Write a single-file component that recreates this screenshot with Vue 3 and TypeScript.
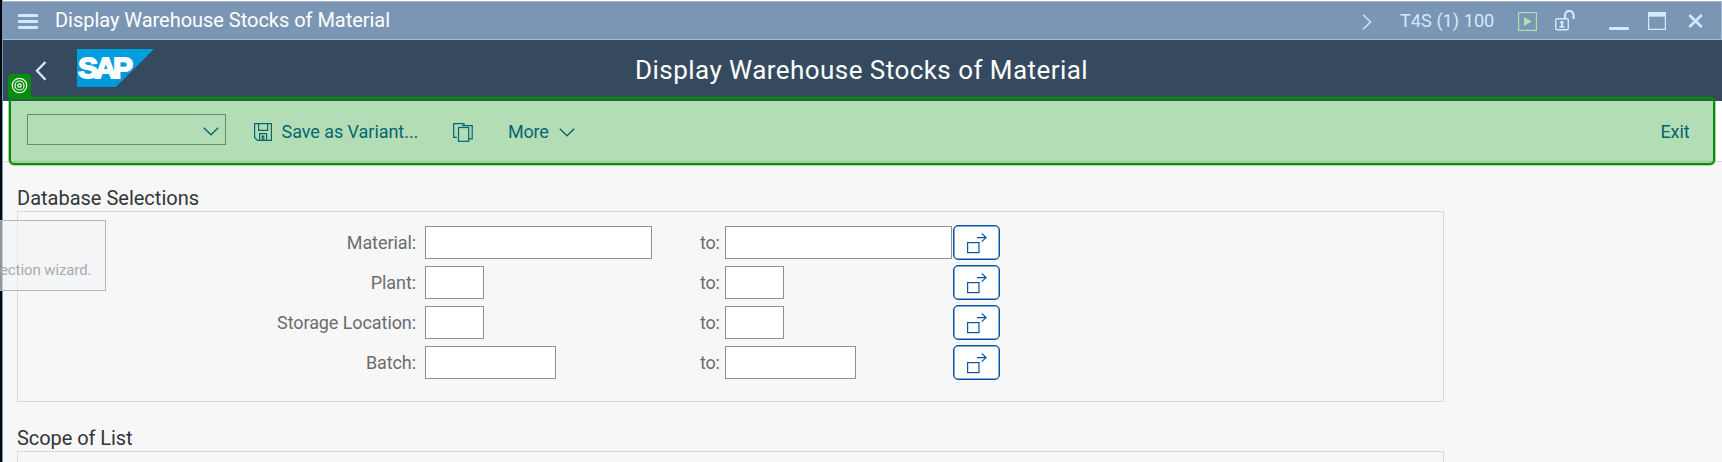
<script setup lang="ts">
interface SelectionRow {
  label: string
  size: 'long' | 'short' | 'medium'
}

const title = 'Display Warehouse Stocks of Material'
const system = 'T4S (1) 100'

const rows: SelectionRow[] = [
  { label: 'Material:', size: 'long' },
  { label: 'Plant:', size: 'short' },
  { label: 'Storage Location:', size: 'short' },
  { label: 'Batch:', size: 'medium' },
]
</script>

<template>
  <div class="window">
    <header class="titlebar">
      <svg class="menu" width="20" height="16" viewBox="0 0 20 16">
        <path d="M1 1.5H19M1 7.5H19M1 13.5H19" fill="none" stroke="#d1e8ff" stroke-width="2.8" stroke-linecap="round" />
      </svg>
      <span class="caption">{{ title }}</span>
      <div class="status">
        <svg class="expand" width="10" height="16" viewBox="0 0 10 16">
          <path d="M1 .8L8.6 8L1 15.2" fill="none" stroke="#d1e8ff" stroke-width="1.4" />
        </svg>
        <span class="system">{{ system }}</span>
        <svg class="play" width="19" height="19" viewBox="0 0 19 19">
          <rect x=".6" y=".6" width="17.8" height="17.8" fill="none" stroke="#abe2ab" stroke-width="1.2" />
          <path d="M6 5L14 9.5L6 14Z" fill="#abe2ab" />
        </svg>
        <svg class="lock" width="20" height="21" viewBox="0 0 20 21">
          <rect x=".7" y="8.7" width="12.6" height="11" rx="1.5" fill="none" stroke="#d1e8ff" stroke-width="1.4" />
          <path d="M10 9V5.2A4.3 4.3 0 0 1 18.6 5.2V9" fill="none" stroke="#d1e8ff" stroke-width="2.2" />
          <circle cx="7" cy="12.6" r="1.8" fill="#d1e8ff" />
          <path d="M6 13H8V16H9.5V17.8H4.5V16H6Z" fill="#d1e8ff" />
        </svg>
        <svg class="minimize" width="20" height="3" viewBox="0 0 20 3">
          <rect width="20" height="3" rx="1" fill="#d1e8ff" />
        </svg>
        <svg class="maximize" width="18" height="18" viewBox="0 0 18 18">
          <rect x=".6" y=".6" width="16.8" height="16.8" fill="none" stroke="#d1e8ff" stroke-width="1.3" />
          <rect width="18" height="4.7" fill="#d1e8ff" />
        </svg>
        <svg class="close" width="15" height="14" viewBox="0 0 15 14">
          <path d="M1.3 1L13.7 13M13.7 1L1.3 13" fill="none" stroke="#d1e8ff" stroke-width="2.6" />
        </svg>
      </div>
    </header>

    <div class="shell">
      <svg class="back" width="12" height="20" viewBox="0 0 12 20">
        <path d="M10.5 1L2 9.7L10.5 18.8" fill="none" stroke="#d1e8ff" stroke-width="2.4" />
      </svg>
      <svg class="logo" width="77" height="38" viewBox="0 0 77 38">
        <defs>
          <linearGradient id="logo-fill" x1="0" y1="0" x2="0" y2="1">
            <stop offset="0" stop-color="#009fe0" />
            <stop offset="1" stop-color="#0097dc" />
          </linearGradient>
        </defs>
        <path d="M0 0H77L39 38H0Z" fill="url(#logo-fill)" />
        <text x="1" y="29.2" class="logo-text" textLength="55" lengthAdjust="spacing">SAP</text>
      </svg>
      <h1>{{ title }}</h1>
    </div>

    <nav class="toolbar">
      <div class="combo">
        <svg width="16" height="9" viewBox="0 0 16 9">
          <path d="M.8 .8L8 7.8L15.2 .8" fill="none" stroke="#0854a0" stroke-width="1.4" />
        </svg>
      </div>
      <button class="tool save">
        <svg width="18" height="18" viewBox="0 0 18 18" fill="none" stroke="#0854a0" stroke-width="1.2">
          <path d="M.6 .6H17.4V17.4H3.5L.6 14.5ZM4.6 .6V7.4H13.6V.6M5.6 17.4V10.6H12.6V17.4M8.2 17V13.2H9.8V17" />
        </svg>
        <span>Save as Variant...</span>
      </button>
      <button class="tool copy">
        <svg width="20" height="19" viewBox="0 0 20 19" fill="none" stroke="#0854a0" stroke-width="1.2">
          <rect x="5.5" y="4.5" width="10.2" height="13.8" />
          <path d="M3.8 14.3H.7V.7H11V2.7M9 2.7H19.2V15.8H16" />
        </svg>
      </button>
      <button class="tool more">
        <span>More</span>
        <svg width="16" height="9" viewBox="0 0 16 9">
          <path d="M.8 .8L8 7.8L15.2 .8" fill="none" stroke="#0854a0" stroke-width="1.4" />
        </svg>
      </button>
      <button class="tool exit">Exit</button>
    </nav>

    <main class="content">
      <h2>Database Selections</h2>
      <section class="group">
        <div v-for="row in rows" :key="row.label" class="row">
          <label>{{ row.label }}</label>
          <div class="cell"><input type="text" :class="row.size" /></div>
          <span class="to">to:</span>
          <div class="cell end"><input type="text" :class="row.size" /></div>
          <button class="multi">
            <svg width="20" height="21" viewBox="0 0 20 21" fill="none" stroke="#0854a0" stroke-width="1.2">
              <rect x=".6" y="9.6" width="11.4" height="10" />
              <path d="M10 4.6H19M14.8 .6L19 4.6L14.8 8.6" />
            </svg>
          </button>
        </div>
      </section>
      <h2 class="second">Scope of List</h2>
      <section class="group"></section>
    </main>

    <div class="highlight"></div>
    <div class="marker">
      <svg width="17" height="17" viewBox="0 0 17 17" fill="none" stroke="#fff" stroke-width="1.2">
        <circle cx="8.5" cy="8.5" r="7.2" />
        <circle cx="8.5" cy="8.5" r="4.5" />
        <circle cx="8.5" cy="8.5" r="1.7" />
      </svg>
    </div>
    <div class="hint">ection wizard.</div>
  </div>
</template>

<style>
body {
  margin: 0;
  overflow: hidden;
}
</style>

<style scoped>
.window {
  position: relative;
  box-sizing: border-box;
  width: 1722px;
  height: 462px;
  overflow: hidden;
  padding-left: 2px;
  background: #f7f7f7;
  box-shadow: inset 2px 0 #04070c, inset 3px 0 #6f96c0;
  font-family: Roboto, 'Liberation Sans', sans-serif;
  font-size: 18px;
}

svg {
  display: block;
  flex: none;
}

button {
  padding: 0;
  border: 0;
  background: none;
  font: inherit;
  color: inherit;
}

.titlebar {
  box-sizing: border-box;
  display: flex;
  height: 40px;
  margin-left: 1px;
  border-top: 1px solid #fff;
  border-bottom: 1px solid #a9bbd2;
  background: #7b96b5;
  box-shadow: inset 0 1px #a3b6cd, inset -1px 0 #a9bbd2;
}

.menu {
  margin: 13px 0 0 15px;
}

.caption {
  margin: 7px 0 0 17px;
  font-size: 20px;
  line-height: 24px;
  letter-spacing: -0.03px;
  color: #fff;
}

.status {
  display: flex;
  margin-left: auto;
}

.expand {
  margin: 13px 0 0;
}

.system {
  width: 118px;
  margin: 8px 0 0 28px;
  font-size: 18.2px;
  line-height: 24px;
  color: #d1e8ff;
}

.play {
  margin-top: 11px;
}

.lock {
  margin: 9px 0 0 18px;
}

.minimize {
  margin: 26px 0 0 34px;
}

.maximize {
  margin: 11px 0 0 19px;
}

.close {
  margin: 13px 19px 0 22px;
}

.shell {
  display: flex;
  height: 61px;
  margin-left: 1px;
  background: #364a5f;
}

.back {
  margin: 21px 0 0 32px;
}

.logo {
  margin: 9px 0 0 30px;
}

.logo-text {
  font-family: 'Liberation Sans', sans-serif;
  font-size: 30px;
  font-weight: 700;
  fill: #fff;
  stroke: #fff;
  stroke-width: 1.8px;
}

h1 {
  flex: 1;
  margin: 14px 0 0 481px;
  font-size: 26px;
  font-weight: 400;
  line-height: 32px;
  letter-spacing: 0.45px;
  white-space: nowrap;
  color: #fff;
}

.toolbar {
  box-sizing: border-box;
  display: flex;
  height: 61px;
  margin-left: 1px;
  border-bottom: 1px solid #d9d9d9;
  background: #fff;
  color: #0854a0;
}

.combo {
  box-sizing: border-box;
  display: flex;
  justify-content: flex-end;
  width: 199px;
  height: 31px;
  margin: 13px 0 0 24px;
  padding: 12px 6px 0 0;
  border: 1px solid #89919a;
}

.tool {
  display: flex;
  align-items: center;
  height: 24px;
  margin-top: 19px;
  line-height: 24px;
}

.save {
  gap: 9.5px;
  width: 165px;
  margin-left: 28px;
  letter-spacing: -0.05px;
}

.copy {
  margin-left: 34px;
}

.more {
  gap: 10px;
  margin-left: 35px;
  letter-spacing: -0.2px;
}

.more svg {
  margin-top: 1px;
}

.exit {
  margin-right: 32.5px;
  margin-left: auto;
  letter-spacing: -0.1px;
}

.content {
  padding: 23px 0 0 15px;
}

h2 {
  margin: 0;
  font-size: 20px;
  font-weight: 400;
  line-height: 26px;
  color: #32363a;
}

.second {
  margin-top: 23px;
  letter-spacing: -0.06px;
}

.group {
  box-sizing: border-box;
  width: 1427px;
  height: 191px;
  padding-top: 11px;
  border: 1px solid #d9d9d9;
}

.row {
  display: flex;
  align-items: flex-start;
  height: 40px;
}

.row label {
  width: 398px;
  margin-top: 9px;
  line-height: 22px;
  text-align: right;
  letter-spacing: -0.08px;
  color: #6a6d70;
}

.cell {
  display: flex;
  width: 275px;
  margin: 3px 0 0 9px;
}

.to {
  width: 25px;
  margin: 9px -9px 0 0;
  line-height: 22px;
  letter-spacing: -0.3px;
  color: #6a6d70;
}

.end {
  width: 228px;
}

input {
  box-sizing: border-box;
  height: 33px;
  padding: 0 6px;
  border: 1px solid #89919a;
  background: #fff;
}

.long {
  width: 227px;
}

.short {
  width: 59px;
}

.medium {
  width: 131px;
}

.multi {
  box-sizing: border-box;
  display: flex;
  width: 47px;
  height: 35px;
  margin-top: 2px;
  padding: 7px 0 0 13px;
  border: 1px solid #0854a0;
  border-radius: 5px;
  background: #fff;
  box-shadow: inset 0 0 0 0.5px #0854a0;
}

.highlight {
  position: absolute;
  top: 97px;
  left: 9px;
  box-sizing: border-box;
  width: 1706px;
  height: 68px;
  border: 2px solid #078d0b;
  border-radius: 5px;
  background: rgba(0, 141, 9, 0.3);
  box-shadow: 0 0 0 0.6px rgba(7, 141, 11, 0.6);
}

.marker {
  position: absolute;
  top: 74px;
  left: 8px;
  box-sizing: border-box;
  width: 23px;
  height: 24px;
  padding: 3px;
  border-radius: 4px 4px 0 0;
  background: #078d0b;
}

.hint {
  position: absolute;
  top: 220px;
  left: 0;
  box-sizing: border-box;
  width: 106px;
  height: 71px;
  padding: 39px 0 0;
  border: 1px solid #b5b6b8;
  border-left: 0;
  background: rgba(241, 243, 246, 0.6);
  font-size: 15px;
  line-height: 20px;
  letter-spacing: -0.1px;
  color: #a9abad;
}
</style>
